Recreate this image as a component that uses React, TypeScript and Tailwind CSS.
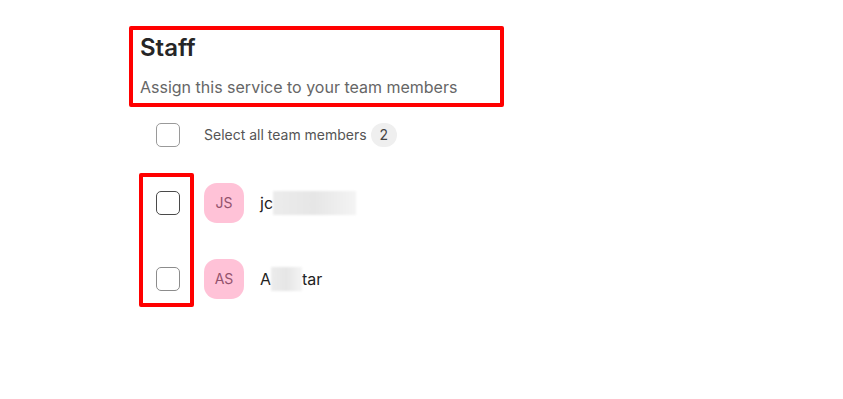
import { FC } from "react";

interface Member {
  initials: string;
  before: string;
  hiddenWidth: string;
  after: string;
  boxClass: string;
}

const members: Member[] = [
  { initials: "JS", before: "jc", hiddenWidth: "w-[83px]", after: "", boxClass: "border-[#4a4a4a]" },
  { initials: "AS", before: "A", hiddenWidth: "w-[31px]", after: "tar", boxClass: "border-[#8c8c8c]" },
];

const Checkbox: FC<{ className?: string }> = ({ className = "border-[#9a9a9a]" }) => (
  <div className={`h-6 w-6 shrink-0 rounded-[5px] border bg-white ${className}`} />
);

const App: FC = () => {
  return (
    <div
      className="relative h-[399px] w-[843px] overflow-hidden bg-white"
      style={{ fontFamily: "Inter, 'Noto Sans', sans-serif" }}
    >
      <div className="flex flex-col pl-[140px] pt-[32px]">
        <h1 className="text-2xl font-semibold leading-8 text-[#262626]">Staff</h1>
        <p className="mt-[11px] text-base leading-6 text-[#666666]">
          Assign this service to your team members
        </p>

        <div className="mt-6 flex items-center">
          <div className="flex w-16 justify-start pl-4">
            <Checkbox />
          </div>
          <span className="text-sm text-[#555555]">Select all team members</span>
          <span className="ml-1 flex h-6 w-[26px] items-center justify-center rounded-full bg-[#efefef] text-sm text-[#444444]">
            2
          </span>
        </div>

        <div className="mt-9 flex flex-col gap-9">
          {members.map((m) => (
            <div key={m.initials} className="flex items-center">
              <div className="flex w-16 justify-start pl-4">
                <Checkbox className={m.boxClass} />
              </div>
              <div className="flex h-10 w-10 items-center justify-center rounded-[13px] bg-[#ffc2d7] text-sm text-[#93526d]">
                {m.initials}
              </div>
              <div className="ml-4 flex items-center text-base text-[#222222]">
                <span>{m.before}</span>
                <span
                  className={`inline-block h-6 ${m.hiddenWidth} bg-gradient-to-r from-[#ececec] via-[#e6e6e6] to-[#f4f4f4] blur-[1px]`}
                />
                <span>{m.after}</span>
              </div>
            </div>
          ))}
        </div>
      </div>

      {/* annotation frames */}
      <div className="pointer-events-none absolute left-[129px] top-[26px] h-[81px] w-[375px] rounded-[2px] border-4 border-[#ff0000]" />
      <div className="pointer-events-none absolute left-[139px] top-[173px] h-[134px] w-[55px] rounded-[2px] border-4 border-[#ff0000]" />
    </div>
  );
};

export default App;
